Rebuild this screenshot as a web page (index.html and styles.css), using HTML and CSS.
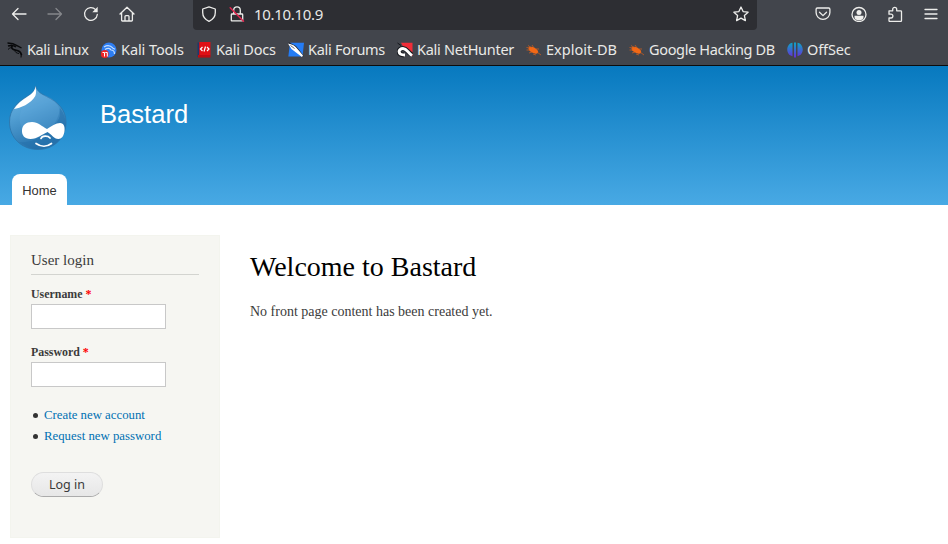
FILE: index.html
```html
<!DOCTYPE html>
<html lang="en">
<head>
<meta charset="utf-8">
<title>Welcome to Bastard | Bastard</title>
<link rel="stylesheet" href="styles.css">
</head>
<body>
<div class="browser">
  <div class="toolbar">
    <div class="nav">
      <svg class="ico" viewBox="0 0 16 16"><path d="M15 8H1.500M7 2.500 1.500 8 7 13.500"/></svg>
      <svg class="ico dim" viewBox="0 0 16 16"><path d="M1 8h13.500M9 2.500 14.500 8 9 13.500"/></svg>
      <svg class="ico" viewBox="0 0 16 16"><path d="M14.300 8.500A6.400 6.400 0 1 1 12.600 3.600"/><path class="solid" d="M14.700.8v5.400H9.300z"/></svg>
      <svg class="ico" viewBox="0 0 16 16"><path d="M1 8 8 1.300 15 8M2.600 7v7.200q0 .8.8.8h9.200q.8 0 .8-.8V7M6 15v-4.500q0-.9.900-.9h2.200q.9 0 .9.900V15"/></svg>
    </div>
    <div class="urlbar">
      <svg class="ico" viewBox="0 0 16 16"><path d="M8 .9 14.300 3v3.600c0 4-2.300 7-6.300 8.700-4-1.700-6.300-4.700-6.300-8.700V3z"/></svg>
      <svg class="ico lock" viewBox="0 0 16 16"><path d="M4.700 8V4.200a3.300 3.300 0 0 1 6.600 0V8M3 8h10q.7 0 .7.700v5.500q0 .7-.7.700H3q-.7 0-.7-.7V8.700q0-.7.700-.7z"/><path class="slash" d="m1.200 1.800 13.300 13.400"/></svg>
      <span class="address">10.10.10.9</span>
      <svg class="ico star" viewBox="0 0 16 16"><path d="m8 1 2.100 4.600 5 .6-3.700 3.400 1 5L8 12.100l-4.400 2.500 1-5L.9 6.200l5-.6z"/></svg>
    </div>
    <div class="tools">
      <svg class="ico" viewBox="0 0 16 16"><path d="M2.300 2h11.400q1.200 0 1.200 1.200v3.300a6.900 6.900 0 0 1-13.800 0V3.200Q1.100 2 2.300 2zM4.500 6.300 8 9.600l3.500-3.300"/></svg>
      <svg class="ico" viewBox="0 0 16 16"><circle cx="8" cy="8.500" r="7"/><circle class="solid" cx="8" cy="6.400" r="2.500"/><path class="solid" d="M3.500 9.700h9v1.200a4.500 3.300 0 0 1-9 0z"/></svg>
      <svg class="ico" viewBox="0 0 16 16"><path d="M2 4.800h3.700V3.300a2 2 0 0 1 4 0v1.500h4q.8 0 .8.800v9q0 .8-.8.800H2.800q-.8 0-.8-.8V12h2a1.900 1.900 0 0 0 0-3.800H2z"/></svg>
      <svg class="ico" viewBox="0 0 16 16"><path d="M2 3.500h12M2 8h12M2 12.500h12"/></svg>
    </div>
  </div>
  <div class="bookmarks">
    <a class="bm"><svg viewBox="0 0 16 16"><g fill="none" stroke="#08090b"><path stroke-width="1.400" d="M.5 1c4 0 7 .8 10 2.800l4 2.200M1 4c3-1 5.500-.8 8 1"/><path stroke-width="1.700" d="M5.500 3C3.500 6 5.500 7.800 8.500 8.200c4 .5 5.500 2 6 5"/><path stroke-width="1" d="M1 7.500c2-2 3-2 4-1.500M8 8.500c0 2 1.500 2.500 4 3M14.300 12.500l-.3 3"/></g></svg><span class="t1">Kali Linux</span></a>
    <a class="bm"><svg viewBox="0 0 16 16"><circle cx="8" cy="8" r="7.500" fill="#2d7df2"/><path d="M3 5c4-2.500 7-1 9 1.200l2 1M4 7.500c3-2 5-1 6 .5 3 0 3.500 2 3.500 4" fill="none" stroke="#c5dfff" stroke-width="1.200"/><circle cx="3.800" cy="12" r="3.900" fill="#ed2424"/><path d="M1.500 10.500h2v4M4.300 10.500h2v4" stroke="#fff" fill="none"/></svg><span class="t2">Kali Tools</span></a>
    <a class="bm"><svg viewBox="0 0 16 16"><path fill="#20366a" d="M1.500.5h3v14.500h-3z"/><path fill="#df1015" d="M3.200 0h11.300v13.500H3.200z"/><path fill="#bd0c12" d="M2 13h12.500v2.600H2z"/><path d="M6.500 5 4.500 7l2 2M11 5l2 2-2 2M9.500 4.500 8 9.500" stroke="#fff" stroke-width="1.200" fill="none"/></svg><span class="t3">Kali Docs</span></a>
    <a class="bm"><svg viewBox="0 0 16 16"><path fill="#247cf5" d="M2 .8h14l-1.500 13.700H.3z"/><path d="m.5 1 7 3.500 4 5 3.500 5" fill="none" stroke="#20242c" stroke-width="1.500"/><path fill="#fff" d="M0 1.500c4 .5 7.500 2.500 9.500 5.500l5.500 6.500-1 1.500-6-4.500L3.500 7z"/><path d="m2.500 3.500 4 3" stroke="#20242c" stroke-width=".7"/></svg><span class="t4">Kali Forums</span></a>
    <a class="bm"><svg viewBox="0 0 16 16"><path fill="#f02d38" d="M4 .8h11.500V14L9 10z"/><path fill="none" stroke="#171a20" stroke-width="4.800" d="M7 13C0 12.500 1 6.500 6 6.500c4 0 4.500 4 9 6.500"/><path fill="none" stroke="#fff" stroke-width="3" d="M8 13C0 13 1 6.500 6 6.500c4 0 4.500 4 9 7"/><path d="M.5 1 4 3.500" stroke="#14171b"/></svg><span class="t5">Kali NetHunter</span></a>
    <a class="bm"><svg viewBox="0 0 16 16"><ellipse cx="7.500" cy="8.500" rx="5.300" ry="2.700" transform="rotate(28 8 8)" fill="#f36815"/><path d="M.5 5.500 4 6M2 3.500 6 6m0-3L8 6M.5 8 4 8M3 11l3-1m1 2 3 1m0-6 3 0m-2 3 4 3" stroke="#d9601b" stroke-width=".7"/></svg><span class="t6">Exploit-DB</span></a>
    <a class="bm"><svg viewBox="0 0 16 16"><ellipse cx="7.500" cy="8.500" rx="5.300" ry="2.700" transform="rotate(28 8 8)" fill="#f36815"/><path d="M.5 5.500 4 6M2 3.500 6 6m0-3L8 6M.5 8 4 8M3 11l3-1m1 2 3 1m0-6 3 0m-2 3 4 3" stroke="#d9601b" stroke-width=".7"/></svg><span class="t7">Google Hacking DB</span></a>
    <a class="bm"><svg viewBox="0 0 16 16"><defs><linearGradient id="os" x1="0" y1="0" x2="0" y2="16" gradientUnits="userSpaceOnUse"><stop stop-color="#08a9c4"/><stop offset="1" stop-color="#6b2ad9"/></linearGradient></defs><path fill="url(#os)" d="M5.500.8v13.400C-1.500 13.500-1.500 1.800 5.500.8zM7 .5h2v15H7zM10.500.8v13.400c7-.7 7-12.400 0-13.400z"/></svg><span class="t8">OffSec</span></a>
  </div>
</div>
<header class="header">
  <div class="brand">
    <svg class="logo" viewBox="0 0 58 66">
      <defs><linearGradient id="drop" x1="0" y1="0" x2=".4" y2="1"><stop stop-color="#79bae5"/><stop offset=".45" stop-color="#529fd3"/><stop offset="1" stop-color="#2471ac"/></linearGradient></defs>
      <path fill="url(#drop)" stroke="#2d74a8" stroke-width=".8" d="M26.500 1c2 6 5.500 7.500 11 10.500C49 17 57 25 57 37c0 16-12 27.500-28 27.500S.5 53 .5 37c0-13 8.500-20 16.500-25C23 8.500 26 6 26.500 1z"/>
      <path fill="#2672ab" opacity=".6" d="M51 23c7 9 8 21 1 30-9 12-28 14-42 4 19 2 39-14 41-34z"/>
      <path fill="#69ace0" opacity=".25" d="M27 9c14 0 24 9 24 20-1 14-20 19-36 17C5 33 13 16 27 9z"/>
      <path fill="#fff" d="M26.500 1c.6 4 1 7-.2 10C22 19 11 23 5 24c3-5 8-9 13-12 5-3 8-6 8.500-11z"/>
      <path fill="#fff" d="M23 37c6 0 10 4.500 15 7 4-2.500 9-6 13-6 4 0 5 4 4.500 8-.5 5-3 8-6 8-5 0-7-5-11-7-5 2-10 7-17 7-6 0-9-4-8.500-9 .4-5 4-8 10-8z"/>
      <path d="M32 53.500c1-3 7-3 9-.5M27 58.500c5 3.500 11 3.500 15.500 0" fill="none" stroke="#fff" stroke-width="1.700" stroke-linecap="round"/>
    </svg>
    <div class="site-name">Bastard</div>
  </div>
  <nav class="tabs"><a class="tab">Home</a></nav>
</header>
<main class="page">
  <aside class="sidebar">
    <h2>User login</h2>
    <form>
      <label for="name">Username <b>*</b></label>
      <input id="name" type="text">
      <label for="pass">Password <b>*</b></label>
      <input id="pass" type="password">
      <ul>
        <li><a>Create new account</a></li>
        <li><a>Request new password</a></li>
      </ul>
      <button type="button">Log in</button>
    </form>
  </aside>
  <section class="content">
    <h1>Welcome to Bastard</h1>
    <p>No front page content has been created yet.</p>
  </section>
</main>
</body>
</html>
```
FILE: styles.css
```css
* { box-sizing: border-box; }
body { margin: 0; height: 544px; overflow: hidden; background: #fff; color: #3b3b3b; font-family: "Liberation Serif", serif; }
.browser { height: 66px; background: #42454c; border-bottom: 1px solid #0c0c0d; color: #e9e9e7; font-family: "Noto Sans", sans-serif; }
.toolbar { display: flex; height: 30px; }
.ico { width: 16px; height: 16px; flex: none; fill: none; stroke: #ededeb; stroke-width: 1.300; stroke-linejoin: round; stroke-linecap: round; }
.dim { stroke: #85878b; }
.ico .solid { fill: #ededeb; stroke: none; }
.ico .slash { stroke: #e2264f; stroke-width: 1.500; }
.nav { display: flex; gap: 20px; width: 193px; padding: 6px 0 0 11px; }
.urlbar { display: flex; width: 564px; padding: 6px 8px 0; background: #2d2e33; border-radius: 0 0 4px 4px; }
.lock { margin-left: 12px; }
.address { margin: -2px 0 0 9px; font-size: 15px; line-height: 20px; letter-spacing: -.3px; }
.star { margin-left: auto; }
.tools { display: flex; gap: 20px; padding: 6px 0 0 58px; }
.bookmarks { display: grid; grid-template-columns: 94px 95px 92px 109px 129px 103px 158px 80px; padding: 9px 0 0 7px; }
.bm { display: flex; gap: 4px; font-size: 14.500px; line-height: 20px; white-space: nowrap; }
.bm svg { width: 16px; height: 16px; margin-top: 3px; flex: none; }
.t1 { letter-spacing: -.38px; }
.t2 { letter-spacing: -.08px; }
.t3 { letter-spacing: -.2px; }
.t4 { letter-spacing: -.28px; }
.t5 { letter-spacing: -.27px; }
.t6 { letter-spacing: .02px; }
.t7 { letter-spacing: -.34px; }
.t8 { letter-spacing: -.12px; }
.header { height: 139px; background: linear-gradient(#0779bf, #48a9e4); display: flex; flex-direction: column; justify-content: space-between; }
.brand { display: flex; padding: 19px 0 0 9px; }
.logo { width: 58px; height: 66px; }
.site-name { margin: 14px 0 0 33px; color: #fff; font: 25.600px/30px "Liberation Sans", sans-serif; }
.tabs { padding-left: 12px; }
.tab { display: block; width: 55px; height: 31px; background: #fff; border-radius: 8px 8px 0 0; color: #333; font: 12.900px/33px "Liberation Sans", sans-serif; text-align: center; }
.page { display: flex; gap: 30px; padding: 30px 0 0 10px; }
.sidebar { width: 210px; height: 303px; padding: 15px 20px 0; border: 1px solid #f3f4ee; background: #f6f6f2; }
.sidebar h2 { height: 24px; margin: 0 0 12px; border-bottom: 1px solid #d3d4d0; font-size: 15px; font-weight: 400; line-height: 19px; }
label { display: block; height: 17px; font-size: 11.900px; font-weight: 700; line-height: 15px; }
label b { color: #f00; }
input { display: block; width: 135px; height: 25px; margin: 0 0 16px; border: 1px solid #c8c8c8; background: #fff; }
ul { margin: 18px 0 25px; padding: 0 0 0 2px; list-style: none; font-size: 12.800px; line-height: 21px; }
li { display: flex; align-items: center; gap: 6px; }
li::before { width: 5px; height: 5px; border-radius: 50%; background: #333; content: ""; }
li a { color: #0071b3; }
button { display: block; width: 72px; height: 25px; padding: 0; border: 1px solid #dedede; border-bottom-color: #ababab; border-radius: 13px; background: linear-gradient(#f3f3f3, #e7e7e7); color: #3a3a3a; font: 12.500px/22px "Noto Sans", sans-serif; }
.content { padding-top: 15px; }
h1 { margin: 0; color: #000; font-size: 28px; font-weight: 400; line-height: 34px; }
p { margin: 19px 0 0; font-size: 14px; line-height: 17px; }
```
